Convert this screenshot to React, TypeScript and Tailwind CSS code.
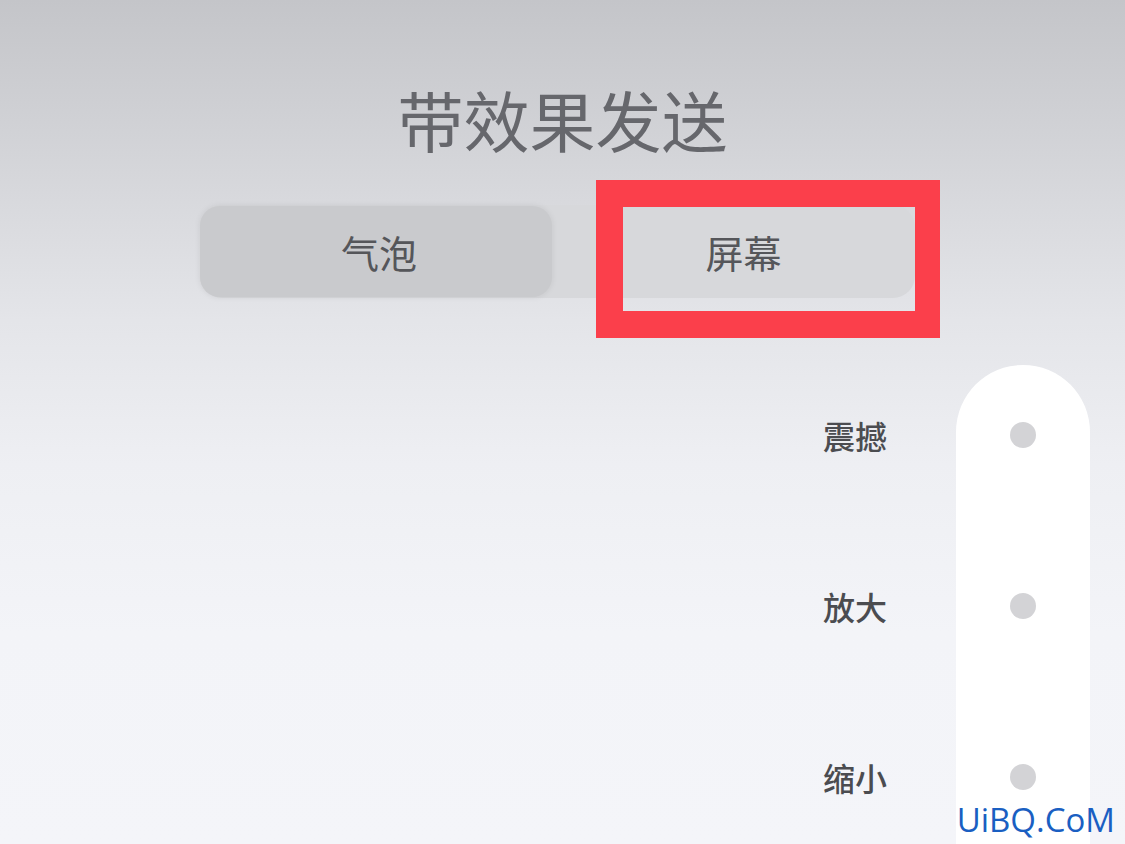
import React from "react";

const cjk = { fontFamily: '"Noto Sans CJK SC", "Noto Sans", sans-serif' };

const effects = ["震撼", "放大", "缩小"];

export default function App() {
  return (
    <div
      className="relative w-[1125px] h-[844px] overflow-hidden bg-[linear-gradient(180deg,#c4c5c9_0%,#d3d4d8_18%,#e4e5e9_38%,#eeeff3_55%,#f3f4f8_75%,#f4f5f9_100%)]"
      style={cjk}
    >
      {/* Title */}
      <h1 className="pt-[85px] text-center text-[66px] leading-none font-normal text-[#66676c]">
        带效果发送
      </h1>

      {/* Bubble / screen switch */}
      <div className="mt-[54px] ml-[200px] relative w-[715px]">
        <div className="flex h-[93px] rounded-[22px] bg-[#d7d8db]">
          <button
            type="button"
            className="w-[352px] h-[91px] mt-[1px] rounded-[20px] bg-[#c9cacd] shadow-[0_0_6px_rgba(0,0,0,0.08)] text-[38px] leading-none text-[#55565a] pl-[6px]"
          >
            气泡
          </button>
          <button type="button" className="flex-1 pl-[20px] text-[38px] leading-none text-[#55565a]">
            屏幕
          </button>
        </div>
        {/* red highlight frame */}
        <div className="absolute left-[396px] top-[-25px] w-[344px] h-[158px] border-[27px] border-r-[25px] border-[#fb3f4b] pointer-events-none" />
      </div>

      {/* Effect list */}
      <div className="mt-[67px] flex justify-end pr-[35px]">
        <div className="flex flex-col items-end pt-[57px] gap-[145px] mr-[69px]">
          {effects.map((e) => (
            <div key={e} className="h-[26px] flex items-center text-[32px] font-medium text-[#4b4c50]">
              {e}
            </div>
          ))}
        </div>
        <div className="w-[134px] h-[479px] rounded-t-[67px] bg-white flex flex-col items-center pt-[57px] gap-[145px]">
          {effects.map((e) => (
            <div key={e} className="w-[26px] h-[26px] rounded-full bg-[#d3d3d6]" />
          ))}
        </div>
      </div>

      {/* watermark */}
      <div
        className="absolute right-[10px] bottom-[8px] text-[33px] leading-none text-[#1a5fc2]"
        style={{ fontFamily: '"Open Sans", "DejaVu Sans", sans-serif' }}
      >
        UiBQ.CoM
      </div>
    </div>
  );
}
